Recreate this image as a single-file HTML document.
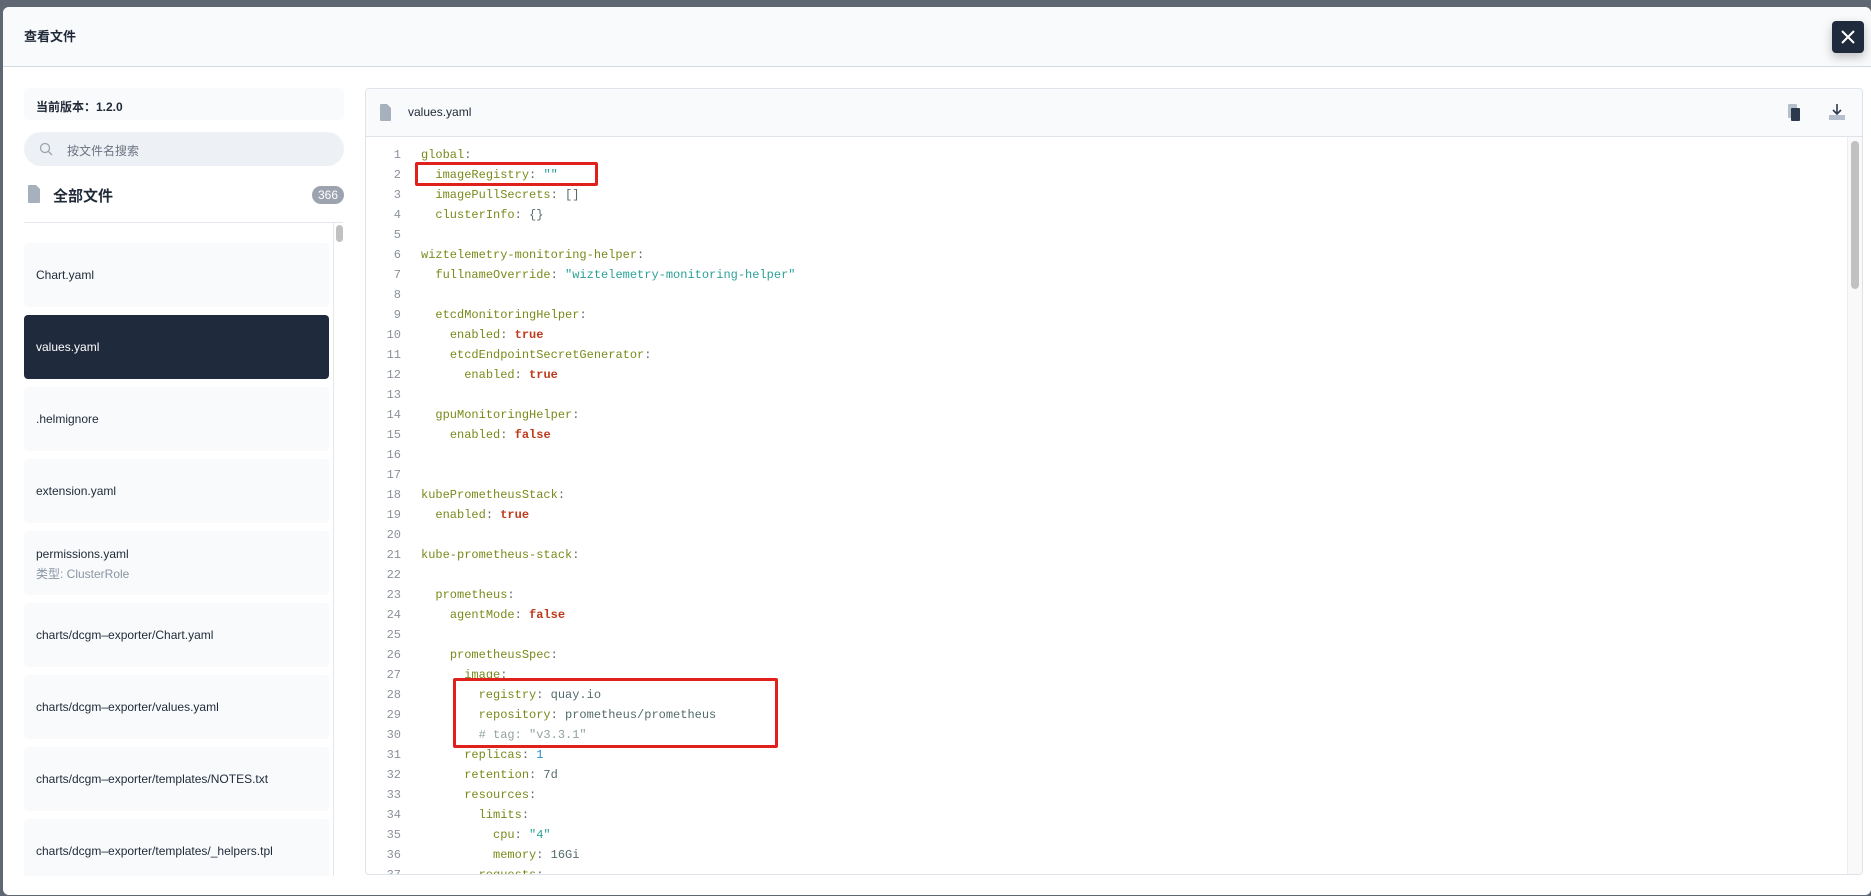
<!DOCTYPE html>
<html><head><meta charset="utf-8"><style>
*{box-sizing:border-box;margin:0;padding:0}
body{width:1871px;height:896px;background:#5f6773;position:relative;overflow:hidden;font-family:"Liberation Sans","Noto Sans CJK SC",sans-serif;color:#1f2937}
.modal{position:absolute;left:3px;top:7px;width:1868px;height:888px;background:#fff;border-radius:6px;overflow:hidden}
.hdr{position:absolute;left:0;top:0;right:0;height:60px;background:#f8fafc;border-bottom:1px solid #d6dbe3}
.hdr .t{position:absolute;left:21px;top:19px;font-size:13px;font-weight:bold}
.close{position:absolute;left:1829px;top:14px;width:32px;height:32px;background:#1f2a3c;border-radius:4px;box-shadow:0 4px 10px rgba(0,0,0,.25)}
.ver{position:absolute;left:21px;top:81px;width:320px;height:32px;background:#f8fafc;border-radius:4px;font-size:12px;font-weight:bold;padding:10px 0 0 12px}
.search{position:absolute;left:21px;top:125px;width:320px;height:34px;background:#edf1f6;border-radius:17px;font-size:12px;color:#6b7280;padding:10px 0 0 43px}
.all{position:absolute;left:50px;top:178px;font-size:15px;font-weight:bold}
.badge{position:absolute;left:309px;top:179px;width:32px;height:18px;border-radius:9px;background:#9ca3af;color:#fff;font-size:12px;text-align:center;line-height:18px}
.div{position:absolute;left:21px;top:215px;width:319px;border-top:1px solid #e5e9ef}
.list{position:absolute;left:21px;top:216px;width:322px;height:653px;overflow:hidden}
.sb{position:absolute;left:309px;top:0;width:1px;height:653px;background:#e5e7eb}
.thumb{position:absolute;left:312px;top:2px;width:7px;height:17px;border-radius:4px;background:#c1c1c1}
.card{position:absolute;left:0;width:305px;height:64px;background:#f8fafc;border-radius:4px;font-size:12px;padding:0 0 0 12px;line-height:64px;color:#1f2937}
.card.sel{background:#1f2a3c;color:#fff}
.card .s{color:#8b95a3}
.code{position:absolute;left:362px;top:81px;width:1498px;height:787px;border:1px solid #dfe4ea;border-radius:4px;overflow:hidden}
.ch{height:48px;background:#f8fafc;border-bottom:1px solid #dfe4ea;position:relative}
.ch .n{position:absolute;left:42px;top:16px;font-size:12px}
pre{position:absolute;left:0;top:56px;font-family:"Liberation Mono",monospace;font-size:12px;line-height:20px;color:#5a6b6b}
.ln{display:inline-block;width:35px;text-align:right;color:#8a9199;margin-right:20px}
.k{color:#7a8a1a}.s2{color:#2aa198}.b{color:#c0391b;font-weight:bold}.nm{color:#268bd2}.c{color:#93a1a1}.p{color:#556b6b}
.csb{position:absolute;right:0;top:48px;width:15px;height:740px;background:#f9f9f9;border-left:1px solid #eee}
.csb i{position:absolute;left:3px;top:4px;width:8px;height:148px;border-radius:4px;background:#c1c1c1}
.red{position:absolute;border:3px solid #e0201b;border-radius:2px}
</style></head><body>
<div class="modal">
<div class="hdr"><div class="t">查看文件</div>
<div class="close"><svg width="32" height="32"><path d="M10 10L22 22M22 10L10 22" stroke="#fff" stroke-width="2"/></svg></div></div>
<div class="ver">当前版本：1.2.0</div>
<div class="search"><svg style="position:absolute;left:15px;top:10px" width="15" height="15"><circle cx="6" cy="6" r="4.5" fill="none" stroke="#9ca3af" stroke-width="1.3"/><path d="M9.5 9.5L13 13" stroke="#9ca3af" stroke-width="1.3"/></svg>按文件名搜索</div>
<svg style="position:absolute;left:25px;top:178px" width="13" height="18"><path d="M0 1Q0 0 1 0H8L12 4V17Q12 18 11 18H1Q0 18 0 17Z" fill="#a7b1bd"/></svg>
<div class="all">全部文件</div><div class="badge">366</div>
<div class="div"></div>
<div class="list">
<div class="sb"></div><div class="thumb"></div>
<div class="card" style="top:20px">Chart.yaml</div>
<div class="card sel" style="top:92px">values.yaml</div>
<div class="card" style="top:164px">.helmignore</div>
<div class="card" style="top:236px">extension.yaml</div>
<div class="card" style="top:308px;line-height:20px;padding-top:13px">permissions.yaml<br><span class="s">类型: ClusterRole</span></div>
<div class="card" style="top:380px">charts/dcgm–exporter/Chart.yaml</div>
<div class="card" style="top:452px">charts/dcgm–exporter/values.yaml</div>
<div class="card" style="top:524px">charts/dcgm–exporter/templates/NOTES.txt</div>
<div class="card" style="top:596px">charts/dcgm–exporter/templates/_helpers.tpl</div>
</div>
<div class="code">
<div class="ch"><svg style="position:absolute;left:14px;top:15px" width="12" height="17"><path d="M0 1Q0 0 1 0H7L11 4V16Q11 17 10 17H1Q0 17 0 16Z" fill="#a7b1bd"/></svg><div class="n">values.yaml</div>
<svg style="position:absolute;left:1422px;top:15px" width="14" height="18"><rect x="0" y="0" width="9" height="14" rx="1" fill="#b5c0cc"/><rect x="3" y="4" width="9" height="13" rx="1" fill="#2d3a4d"/></svg>
<svg style="position:absolute;left:1462px;top:14px" width="18" height="18"><path d="M9 1V10" stroke="#2d3a4d" stroke-width="1.6"/><path d="M5 7L9 11L13 7" fill="none" stroke="#2d3a4d" stroke-width="1.6"/><rect x="1" y="12" width="16" height="5" fill="#b5c0cc"/></svg>
</div>
<pre><span class="ln">1</span><span class="k">global</span><span class="p">:</span>
<span class="ln">2</span>  <span class="k">imageRegistry</span><span class="p">:</span> <span class="s2">""</span>
<span class="ln">3</span>  <span class="k">imagePullSecrets</span><span class="p">: []</span>
<span class="ln">4</span>  <span class="k">clusterInfo</span><span class="p">: {}</span>
<span class="ln">5</span>
<span class="ln">6</span><span class="k">wiztelemetry-monitoring-helper</span><span class="p">:</span>
<span class="ln">7</span>  <span class="k">fullnameOverride</span><span class="p">:</span> <span class="s2">"wiztelemetry-monitoring-helper"</span>
<span class="ln">8</span>
<span class="ln">9</span>  <span class="k">etcdMonitoringHelper</span><span class="p">:</span>
<span class="ln">10</span>    <span class="k">enabled</span><span class="p">:</span> <span class="b">true</span>
<span class="ln">11</span>    <span class="k">etcdEndpointSecretGenerator</span><span class="p">:</span>
<span class="ln">12</span>      <span class="k">enabled</span><span class="p">:</span> <span class="b">true</span>
<span class="ln">13</span>
<span class="ln">14</span>  <span class="k">gpuMonitoringHelper</span><span class="p">:</span>
<span class="ln">15</span>    <span class="k">enabled</span><span class="p">:</span> <span class="b">false</span>
<span class="ln">16</span>
<span class="ln">17</span>
<span class="ln">18</span><span class="k">kubePrometheusStack</span><span class="p">:</span>
<span class="ln">19</span>  <span class="k">enabled</span><span class="p">:</span> <span class="b">true</span>
<span class="ln">20</span>
<span class="ln">21</span><span class="k">kube-prometheus-stack</span><span class="p">:</span>
<span class="ln">22</span>
<span class="ln">23</span>  <span class="k">prometheus</span><span class="p">:</span>
<span class="ln">24</span>    <span class="k">agentMode</span><span class="p">:</span> <span class="b">false</span>
<span class="ln">25</span>
<span class="ln">26</span>    <span class="k">prometheusSpec</span><span class="p">:</span>
<span class="ln">27</span>      <span class="k">image</span><span class="p">:</span>
<span class="ln">28</span>        <span class="k">registry</span><span class="p">: quay.io</span>
<span class="ln">29</span>        <span class="k">repository</span><span class="p">: prometheus/prometheus</span>
<span class="ln">30</span>        <span class="c"># tag: "v3.3.1"</span>
<span class="ln">31</span>      <span class="k">replicas</span><span class="p">:</span> <span class="nm">1</span>
<span class="ln">32</span>      <span class="k">retention</span><span class="p">: 7d</span>
<span class="ln">33</span>      <span class="k">resources</span><span class="p">:</span>
<span class="ln">34</span>        <span class="k">limits</span><span class="p">:</span>
<span class="ln">35</span>          <span class="k">cpu</span><span class="p">:</span> <span class="s2">"4"</span>
<span class="ln">36</span>          <span class="k">memory</span><span class="p">: 16Gi</span>
<span class="ln">37</span>        <span class="k">requests</span><span class="p">:</span></pre>
<div class="csb"><i></i></div>
</div>
<div class="red" style="left:412px;top:155px;width:183px;height:24px"></div>
<div class="red" style="left:450px;top:671px;width:325px;height:70px"></div>
</div>
</body></html>
